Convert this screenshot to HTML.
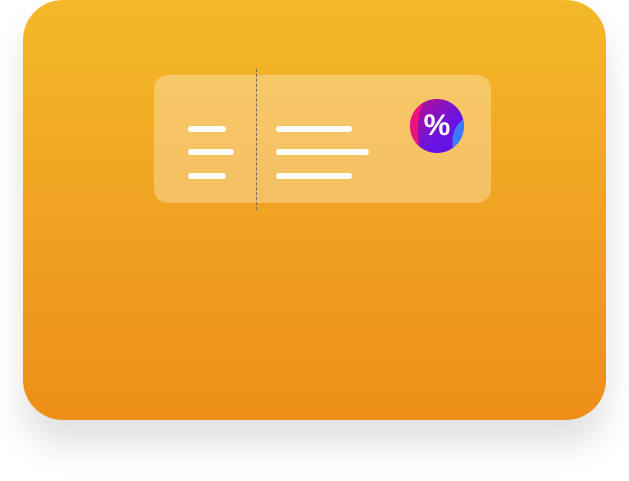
<!DOCTYPE html>
<html><head><style>
body{margin:0;width:629px;height:481px;background:#fff;position:relative;overflow:hidden;font-family:"Liberation Sans",sans-serif}
.main{position:absolute;left:23px;top:0;width:583px;height:420px;border-radius:40px;background:linear-gradient(#f3b929,#ed8e19);box-shadow:0 25px 35px rgba(0,0,0,0.12)}
.card{position:absolute;left:154px;top:75px;width:337px;height:128px;border-radius:14px;background:rgba(255,255,255,0.3)}
.dash{position:absolute;left:256px;top:69px;height:141px;border-left:1px dashed #6b6b70}
.b{position:absolute;height:6px;border-radius:3px;background:#fff}
.c{position:absolute;left:410px;top:99px;width:54px;height:54px;border-radius:50%;overflow:hidden;background:linear-gradient(135deg,#c0108a,#6a12e0 60%,#5b14f0)}
.c span{position:absolute;left:0;top:0;width:54px;line-height:54px;text-align:center;color:#fff;font-weight:bold;font-size:30px}
</style></head><body>
<div class="main"></div>
<div class="card"></div>
<div class="dash"></div>
<div class="b" style="left:188px;top:126px;width:38px"></div>
<div class="b" style="left:188px;top:149px;width:46px"></div>
<div class="b" style="left:188px;top:173px;width:38px"></div>
<div class="b" style="left:276px;top:126px;width:76px"></div>
<div class="b" style="left:276px;top:149px;width:93px"></div>
<div class="b" style="left:276px;top:173px;width:76px"></div>
<div class="c"><svg width="54" height="54" style="position:absolute;left:0;top:0"><path d="M0 0H14C8 14 6 30 10 54H0Z" fill="#f0127a"/><path d="M54 20C44 26 40 40 44 54H54Z" fill="#3d7cff"/></svg><span>%</span></div>
</body></html>
